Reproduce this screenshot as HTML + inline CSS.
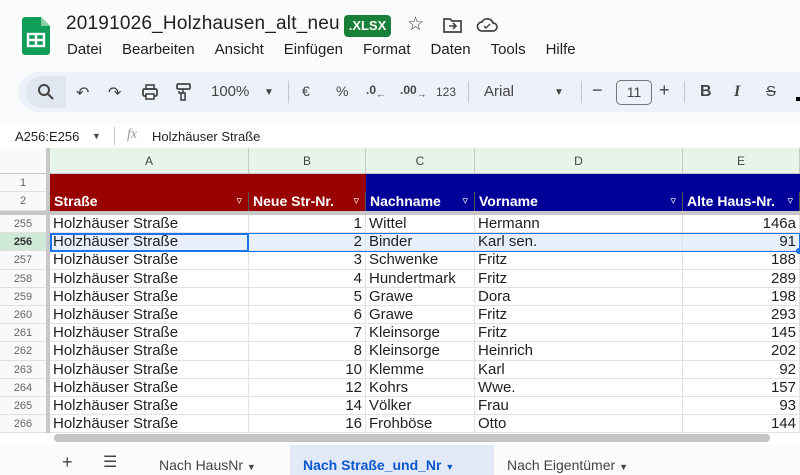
<!DOCTYPE html><html><head><style>
*{margin:0;padding:0;box-sizing:border-box}
body{width:800px;height:475px;overflow:hidden;background:#f9fbfd;font-family:"Liberation Sans",Arial,sans-serif;position:relative;color:#1f1f1f}
.a{position:absolute}
.menu span{margin-right:20px}
.tb{position:absolute;top:72px;left:18px;width:800px;height:40px;background:#edf2fa;border-radius:20px}
.ic{position:absolute;top:83px;font-size:16px;color:#444}
.colh{position:absolute;top:148px;height:26px;background:#e6f4ea;border-right:1px solid #c7c7c7;border-bottom:1px solid #c7c7c7;font-size:12px;color:#444;text-align:center;line-height:26px}
.rh{position:absolute;left:0;width:46px;background:#f8f9fa;border-bottom:1px solid #e0e0e0;font-size:11px;color:#666;text-align:center}
.c{position:absolute;font-size:15px;white-space:nowrap;overflow:hidden;border-right:1px solid #e2e2e2;border-bottom:1px solid #e2e2e2;padding:0 3px;line-height:18px;height:18.2px}
.r{text-align:right}
.hd{position:absolute;top:192px;height:19px;color:#fff;font-weight:bold;font-size:14px;line-height:19px;padding-left:4px;border-right:1px solid #555}
.f{position:absolute;right:6px;top:0;font-size:11px;font-weight:normal}
</style></head><body>
<svg class="a" style="left:22px;top:17px" width="28" height="38" viewBox="0 0 28 38"><path d="M3 0h16l9 9v26a3 3 0 0 1-3 3H3a3 3 0 0 1-3-3V3a3 3 0 0 1 3-3z" fill="#0f9d58"/><path d="M19 0v9h9z" fill="#87ce9f"/><rect x="6" y="17" width="16" height="12" fill="none" stroke="#fff" stroke-width="2.4"/><path d="M6 23h16M14 17v12" stroke="#fff" stroke-width="2.4"/></svg>
<div class="a" style="left:66px;top:13px;font-size:19px;color:#1f1f1f;letter-spacing:0.2px">20191026_Holzhausen_alt_neu</div>
<div class="a" style="left:344px;top:15px;width:47px;height:22px;background:#188038;border-radius:4px;color:#fff;font-size:13px;font-weight:bold;line-height:22px;text-align:center">.XLSX</div>
<div class="a" style="left:407px;top:13px;font-size:19px;color:#444">☆</div>
<svg class="a" style="left:443px;top:17px" width="20" height="16"><path d="M1 2h6l2 2h9v11H1z" fill="none" stroke="#444" stroke-width="1.7"/><path d="M6 9h7M10 6l3 3-3 3" fill="none" stroke="#444" stroke-width="1.6"/></svg>
<svg class="a" style="left:476px;top:17px" width="22" height="16"><path d="M6 14h11a4 4 0 0 0 0-8 6 6 0 0 0-11-1 4.5 4.5 0 0 0 0 9z" fill="none" stroke="#444" stroke-width="1.7"/><path d="M8 9l2 2 4-4" fill="none" stroke="#444" stroke-width="1.5"/></svg>
<div class="a menu" style="left:67px;top:41px;font-size:15px;color:#1f1f1f"><span>Datei</span><span>Bearbeiten</span><span>Ansicht</span><span>Einfügen</span><span>Format</span><span>Daten</span><span>Tools</span><span>Hilfe</span></div>
<div class="tb"></div>
<div class="a" style="left:26px;top:76px;width:40px;height:32px;background:#e1e7f0;border-radius:16px 0 0 16px"></div>
<svg class="a" style="left:37px;top:83px" width="18" height="18"><circle cx="7" cy="7" r="5" fill="none" stroke="#444" stroke-width="2"/><path d="M11 11l5 5" stroke="#444" stroke-width="2"/></svg>
<div class="ic" style="left:76px">↶</div><div class="ic" style="left:108px">↷</div>
<svg class="a" style="left:141px;top:83px" width="18" height="18"><rect x="2" y="6" width="14" height="7" rx="1.5" fill="none" stroke="#444" stroke-width="1.8"/><rect x="5" y="2" width="8" height="4" fill="none" stroke="#444" stroke-width="1.6"/><rect x="5" y="11" width="8" height="5" fill="#fff" stroke="#444" stroke-width="1.6"/></svg>
<svg class="a" style="left:175px;top:82px" width="18" height="20"><rect x="2" y="2" width="13" height="5" rx="1" fill="none" stroke="#444" stroke-width="1.7"/><path d="M8 7v4H4v-2" fill="none" stroke="#444" stroke-width="1.5"/><rect x="6" y="11" width="4" height="7" fill="none" stroke="#444" stroke-width="1.6"/></svg>
<div class="ic" style="left:211px;font-size:15px">100%</div><div class="ic" style="left:264px;font-size:10px;top:87px">▼</div>
<div class="a" style="left:288px;top:81px;width:1px;height:22px;background:#c7c7c7"></div>
<div class="ic" style="left:302px;font-size:14px">€</div><div class="ic" style="left:336px;font-size:14px">%</div>
<div class="ic" style="left:366px;font-size:12px;font-weight:bold">.0<sub>←</sub></div>
<div class="ic" style="left:400px;font-size:12px;font-weight:bold">.00<sub>→</sub></div>
<div class="ic" style="left:436px;font-size:12px;top:85px">123</div>
<div class="a" style="left:468px;top:81px;width:1px;height:22px;background:#c7c7c7"></div>
<div class="ic" style="left:484px;font-size:15px">Arial</div><div class="ic" style="left:554px;font-size:10px;top:87px">▼</div>
<div class="a" style="left:581px;top:81px;width:1px;height:22px;background:#c7c7c7"></div>
<div class="ic" style="left:592px;font-size:18px;top:80px">−</div>
<div class="a" style="left:616px;top:80px;width:36px;height:25px;border:1px solid #747775;border-radius:5px;font-size:14px;text-align:center;line-height:23px;color:#444">11</div>
<div class="ic" style="left:659px;font-size:18px;top:80px">+</div>
<div class="a" style="left:684px;top:81px;width:1px;height:22px;background:#c7c7c7"></div>
<div class="ic" style="left:700px;font-size:16px;font-weight:bold">B</div>
<div class="ic" style="left:734px;font-size:16px;font-style:italic;font-family:'Liberation Serif',serif;font-weight:bold">I</div>
<div class="ic" style="left:766px;font-size:15px;text-decoration:line-through">S</div>
<div class="a" style="left:796px;top:97px;width:4px;height:4px;background:#000"></div>
<div class="a" style="left:0;top:124px;width:800px;height:24px;background:#fff"></div>
<div class="a" style="left:15px;top:129px;font-size:13px">A256:E256</div>
<div class="a" style="left:92px;top:131px;font-size:9px;color:#444">▼</div>
<div class="a" style="left:114px;top:127px;width:1px;height:18px;background:#c7c7c7"></div>
<div class="a" style="left:127px;top:127px;font-size:14px;color:#999;font-style:italic;font-family:'Liberation Serif',serif">fx</div>
<div class="a" style="left:152px;top:129px;font-size:13px">Holzhäuser Straße</div>
<div class="a" style="left:0;top:148px;width:800px;height:290px;background:#fff"></div>
<div class="a" style="left:0;top:148px;width:50px;height:26px;background:#f8f9fa;border-bottom:1px solid #c7c7c7"></div>
<div class="a" style="left:46px;top:148px;width:4px;height:290px;background:#c7c7c7"></div>
<div class="colh" style="left:50px;width:199px">A</div>
<div class="colh" style="left:249px;width:117px">B</div>
<div class="colh" style="left:366px;width:109px">C</div>
<div class="colh" style="left:475px;width:208px">D</div>
<div class="colh" style="left:683px;width:117px">E</div>
<div class="rh" style="top:174px;height:18px;line-height:18px">1</div>
<div class="rh" style="top:192px;height:19px;line-height:19px">2</div>
<div class="a" style="left:50px;top:174px;width:316px;height:18px;background:#990000"></div>
<div class="a" style="left:366px;top:174px;width:434px;height:18px;background:#000099"></div>
<div class="hd" style="left:50px;width:199px;background:#990000">Straße<span class="f">▿</span></div>
<div class="hd" style="left:249px;width:117px;background:#990000">Neue Str-Nr.<span class="f">▿</span></div>
<div class="hd" style="left:366px;width:109px;background:#000099">Nachname<span class="f">▿</span></div>
<div class="hd" style="left:475px;width:208px;background:#000099">Vorname<span class="f">▿</span></div>
<div class="hd" style="left:683px;width:117px;background:#000099">Alte Haus-Nr.<span class="f">▿</span></div>
<div class="a" style="left:0;top:211px;width:800px;height:4px;background:#c7c7c7"></div>
<div id="rows"></div>
<script>
var d=[[255,1,"Wittel","Hermann","146a"],[256,2,"Binder","Karl sen.","91"],[257,3,"Schwenke","Fritz","188"],[258,4,"Hundertmark","Fritz","289"],[259,5,"Grawe","Dora","198"],[260,6,"Grawe","Fritz","293"],[261,7,"Kleinsorge","Fritz","145"],[262,8,"Kleinsorge","Heinrich","202"],[263,10,"Klemme","Karl","92"],[264,12,"Kohrs","Wwe.","157"],[265,14,"Völker","Frau","93"],[266,16,"Frohböse","Otto","144"]];
var h="";d.forEach(function(r,i){var t=215+i*18.2,s=r[0]==256;var bg=s?"background:#e8f0fe;":"";
h+='<div class="rh" style="top:'+t+'px;height:18.2px;line-height:18px;'+(s?'font-weight:bold;color:#333;background:#ceead6':'')+'">'+r[0]+'</div>';
h+='<div class="c" style="left:50px;width:199px;top:'+t+'px;'+bg+'">Holzhäuser Straße</div>';
h+='<div class="c r" style="left:249px;width:117px;top:'+t+'px;'+bg+'">'+r[1]+'</div>';
h+='<div class="c" style="left:366px;width:109px;top:'+t+'px;'+bg+'">'+r[2]+'</div>';
h+='<div class="c" style="left:475px;width:208px;top:'+t+'px;'+bg+'">'+r[3]+'</div>';
h+='<div class="c r" style="left:683px;width:117px;top:'+t+'px;'+bg+'">'+r[4]+'</div>';});
document.getElementById("rows").innerHTML=h;
</script>
<div class="a" style="left:50px;top:233px;width:750px;height:19px;border:1px solid #1a73e8"></div>
<div class="a" style="left:50px;top:233px;width:199px;height:19px;border:2px solid #1a73e8"></div>
<div class="a" style="left:796px;top:248px;width:6px;height:6px;border-radius:50%;background:#1a73e8"></div>
<div class="a" style="left:0;top:433px;width:800px;height:12px;background:#fff"></div>
<div class="a" style="left:54px;top:434px;width:716px;height:8px;border-radius:4px;background:#c4c4c4"></div>
<div class="a" style="left:0;top:445px;width:800px;height:30px;background:#f9fbfd"></div>
<div class="a" style="left:62px;top:452px;font-size:18px;color:#444">+</div>
<div class="a" style="left:103px;top:452px;font-size:16px;color:#444">☰</div>
<div class="a" style="left:159px;top:457px;font-size:14px;color:#444">Nach HausNr <span style="font-size:9px">▼</span></div>
<div class="a" style="left:290px;top:445px;width:204px;height:30px;background:#e1e9f7"></div>
<div class="a" style="left:303px;top:457px;font-size:14px;color:#0b57d0;font-weight:bold">Nach Straße_und_Nr <span style="font-size:9px">▼</span></div>
<div class="a" style="left:507px;top:457px;font-size:14px;color:#444">Nach Eigentümer <span style="font-size:9px">▼</span></div>
</body></html>
